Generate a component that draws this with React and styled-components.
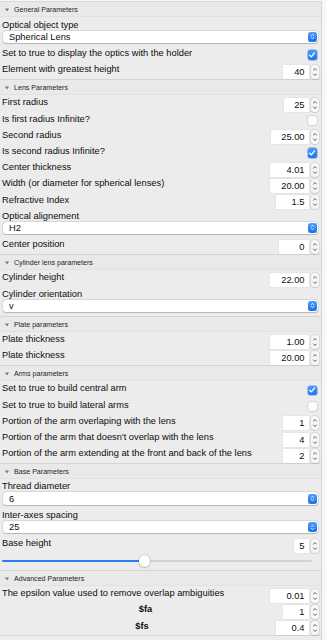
import React from "react";
import styled, { createGlobalStyle } from "styled-components";

const GlobalStyle = createGlobalStyle`
  html, body { margin: 0; padding: 0; background: #f6f6f6; }
  body { font-family: "Liberation Sans", Arial, sans-serif; }
  * { box-sizing: border-box; }
`;

const Window = styled.div`
  width: 326px;
  height: 640px;
  overflow: hidden;
  padding-top: 1px;
  background: #f6f6f6;
`;

const Panel = styled.div`
  width: 322px;
  height: 639px;
  background: #ececec;
  border-top: 1px solid #d9d9d9;
  border-right: 1px solid #d6d6d6;
`;

const Section = styled.section`
  border-bottom: 1px solid #d5d5d5;
  padding-bottom: 1px;
`;

const SectionHeader = styled.div`
  height: 15px;
  display: flex;
  align-items: center;
  gap: 5px;
  padding: 2px 0 0 5px;
  font-size: 7.1px;
  color: #1f1f1f;
  border-bottom: 1px solid #e2e2e2;
  background: #e9e9e9;
`;

const Row = styled.div`
  display: flex;
  align-items: flex-start;
  height: 16.2px;
  padding: 0 2px;
`;

const LabelRow = styled.div`
  height: 13.5px;
  padding: 0 2px;
  display: flex;
`;

const Label = styled.span`
  flex: 1;
  font-size: 9.3px;
  line-height: 11px;
  padding-top: 2.5px;
  color: #0d0d0d;
  white-space: nowrap;
  font-weight: ${(p) => (p.$bold ? 700 : 400)};
  text-align: ${(p) => (p.$center ? "center" : "left")};
  padding-left: ${(p) => (p.$center ? "6px" : "0")};
`;

const NumBox = styled.div`
  margin-top: 3px;
  width: ${(p) => p.$w}px;
  height: 14px;
  background: #fff;
  font-size: 9.3px;
  line-height: 14px;
  text-align: right;
  padding-right: 4px;
  color: #0d0d0d;
  box-shadow: 0 0 0 0.5px rgba(0, 0, 0, 0.06);
`;

const Stepper = styled.div`
  margin-top: 3px;
  margin-left: 2.5px;
  width: 8px;
  height: 14px;
  border-radius: 3px;
  background: #f7f7f7;
  box-shadow: 0 0 0 0.5px rgba(0, 0, 0, 0.16), 0 0.5px 0.5px rgba(0, 0, 0, 0.12);
  display: flex;
  align-items: center;
  justify-content: center;
`;

const CheckBox = styled.div`
  margin-top: 4.6px;
  margin-right: 2px;
  width: 9.5px;
  height: 9.5px;
  border-radius: 2px;
  background: ${(p) => (p.$on ? "linear-gradient(#4b9bfb, #1f74f1)" : "#fbfbfb")};
  box-shadow: ${(p) =>
    p.$on
      ? "0 0 0 0.5px rgba(20, 90, 220, 0.6)"
      : "0 0 0 0.5px rgba(0, 0, 0, 0.16), 0 0.5px 0.5px rgba(0, 0, 0, 0.08)"};
  display: flex;
  align-items: center;
  justify-content: center;
`;

const SelectBox = styled.div`
  margin: 0 3px 2.5px 3px;
  height: 12.5px;
  border-radius: 3px;
  background: #fff;
  box-shadow: 0 0 0 0.5px rgba(0, 0, 0, 0.14), 0 0.5px 1px rgba(0, 0, 0, 0.18);
  display: flex;
  align-items: center;
  padding: 0 1.5px 0 6px;
  font-size: 9.3px;
  color: #0d0d0d;
`;

const SelectText = styled.span`
  flex: 1;
`;

const SelectButton = styled.div`
  width: 9px;
  height: 10px;
  border-radius: 2.5px;
  background: linear-gradient(#4f9efc, #1c72f0);
  display: flex;
  align-items: center;
  justify-content: center;
`;

const SliderRow = styled.div`
  height: 16.7px;
  padding: 1px 9px 0 2px;
  display: flex;
  align-items: center;
`;

const Track = styled.div`
  position: relative;
  flex: 1;
  height: 2px;
  border-radius: 1px;
  background: #d2d2d2;
`;

const TrackFill = styled.div`
  position: absolute;
  left: 0;
  top: 0;
  bottom: 0;
  border-radius: 1px;
  background: #2b7cf5;
`;

const Thumb = styled.div`
  position: absolute;
  top: 50%;
  width: 11.5px;
  height: 11.5px;
  margin: -5.75px 0 0 -5.75px;
  border-radius: 50%;
  background: #fff;
  box-shadow: 0 0 0 0.5px rgba(0, 0, 0, 0.15), 0 0.5px 1.5px rgba(0, 0, 0, 0.3);
`;

const Triangle = () => (
  <svg width="4" height="4" viewBox="0 0 4 4">
    <path d="M0 0.6 H4 L2 3.6 Z" fill="#777" />
  </svg>
);

const SelectArrows = () => (
  <svg width="5" height="7" viewBox="0 0 5 7">
    <path d="M1.3 2.6 L2.5 1.4 L3.7 2.6" fill="none" stroke="#fff" strokeWidth="0.9" strokeLinecap="round" strokeLinejoin="round" />
    <path d="M1.3 4.4 L2.5 5.6 L3.7 4.4" fill="none" stroke="#fff" strokeWidth="0.9" strokeLinecap="round" strokeLinejoin="round" />
  </svg>
);

const StepArrows = () => (
  <svg width="6" height="12" viewBox="0 0 6 12">
    <path d="M1.5 4 L3 2.5 L4.5 4" fill="none" stroke="#4a4a4a" strokeWidth="0.9" strokeLinecap="round" strokeLinejoin="round" />
    <path d="M1.5 8 L3 9.5 L4.5 8" fill="none" stroke="#4a4a4a" strokeWidth="0.9" strokeLinecap="round" strokeLinejoin="round" />
  </svg>
);

const Check = () => (
  <svg width="8" height="8" viewBox="0 0 8 8">
    <path d="M1.6 4.2 L3.3 5.9 L6.5 1.9" fill="none" stroke="#fff" strokeWidth="1.3" strokeLinecap="round" strokeLinejoin="round" />
  </svg>
);

const NumberField = ({ label, value, w, bold }) => (
  <Row>
    <Label $bold={bold} $center={bold}>{label}</Label>
    <NumBox $w={w}>{value}</NumBox>
    <Stepper>
      <StepArrows />
    </Stepper>
  </Row>
);

const CheckField = ({ label, on }) => (
  <Row>
    <Label>{label}</Label>
    <CheckBox $on={on}>{on && <Check />}</CheckBox>
  </Row>
);

const SelectField = ({ label, value }) => (
  <>
    <LabelRow>
      <Label>{label}</Label>
    </LabelRow>
    <SelectBox>
      <SelectText>{value}</SelectText>
      <SelectButton>
        <SelectArrows />
      </SelectButton>
    </SelectBox>
  </>
);

const SliderField = ({ pct }) => (
  <SliderRow>
    <Track>
      <TrackFill style={{ width: `${pct}%` }} />
      <Thumb style={{ left: `${pct}%` }} />
    </Track>
  </SliderRow>
);

const sections = [
  {
    title: "General Parameters",
    items: [
      { t: "select", label: "Optical object type", value: "Spherical Lens" },
      { t: "check", label: "Set to true to display the optics with the holder", on: true },
      { t: "num", label: "Element with greatest height", value: "40", w: 25.5 },
    ],
  },
  {
    title: "Lens Parameters",
    items: [
      { t: "num", label: "First radius", value: "25", w: 24.5 },
      { t: "check", label: "Is first radius Infinite?", on: false },
      { t: "num", label: "Second radius", value: "25.00", w: 37.5 },
      { t: "check", label: "Is second radius Infinite?", on: true },
      { t: "num", label: "Center thickness", value: "4.01", w: 38.5 },
      { t: "num", label: "Width (or diameter for spherical lenses)", value: "20.00", w: 38.5 },
      { t: "num", label: "Refractive Index", value: "1.5", w: 32.5 },
      { t: "select", label: "Optical alignement", value: "H2" },
      { t: "num", label: "Center position", value: "0", w: 29.5 },
    ],
  },
  {
    title: "Cylinder lens parameters",
    items: [
      { t: "num", label: "Cylinder height", value: "22.00", w: 38.5 },
      { t: "select", label: "Cylinder orientation", value: "v" },
    ],
  },
  {
    title: "Plate parameters",
    items: [
      { t: "num", label: "Plate thickness", value: "1.00", w: 38.5 },
      { t: "num", label: "Plate thickness", value: "20.00", w: 38.5 },
    ],
  },
  {
    title: "Arms parameters",
    items: [
      { t: "check", label: "Set to true to build central arm", on: true },
      { t: "check", label: "Set to true to build lateral arms", on: false },
      { t: "num", label: "Portion of the arm overlaping with the lens", value: "1", w: 25.5 },
      { t: "num", label: "Portion of the arm that doesn't overlap with the lens", value: "4", w: 25.5 },
      { t: "num", label: "Portion of the arm extending at the front and back of the lens", value: "2", w: 25.5 },
    ],
  },
  {
    title: "Base Parameters",
    items: [
      { t: "select", label: "Thread diameter", value: "6" },
      { t: "select", label: "Inter-axes spacing", value: "25" },
      { t: "num", label: "Base height", value: "5", w: 14.5 },
      { t: "slider", pct: 46 },
    ],
  },
  {
    title: "Advanced Parameters",
    items: [
      { t: "num", label: "The epsilon value used to remove overlap ambiguities", value: "0.01", w: 38.5 },
      { t: "num", label: "$fa", value: "1", w: 25.5, bold: true },
      { t: "num", label: "$fs", value: "0.4", w: 32.5, bold: true },
    ],
  },
];

const renderItem = (it, i) => {
  switch (it.t) {
    case "select":
      return <SelectField key={i} label={it.label} value={it.value} />;
    case "check":
      return <CheckField key={i} label={it.label} on={it.on} />;
    case "slider":
      return <SliderField key={i} pct={it.pct} />;
    default:
      return <NumberField key={i} label={it.label} value={it.value} w={it.w} bold={it.bold} />;
  }
};

export default function App() {
  return (
    <>
      <GlobalStyle />
      <Window>
        <Panel>
          {sections.map((s, si) => (
            <Section key={si}>
              <SectionHeader>
                <Triangle />
                <span>{s.title}</span>
              </SectionHeader>
              {s.items.map(renderItem)}
            </Section>
          ))}
        </Panel>
      </Window>
    </>
  );
}
